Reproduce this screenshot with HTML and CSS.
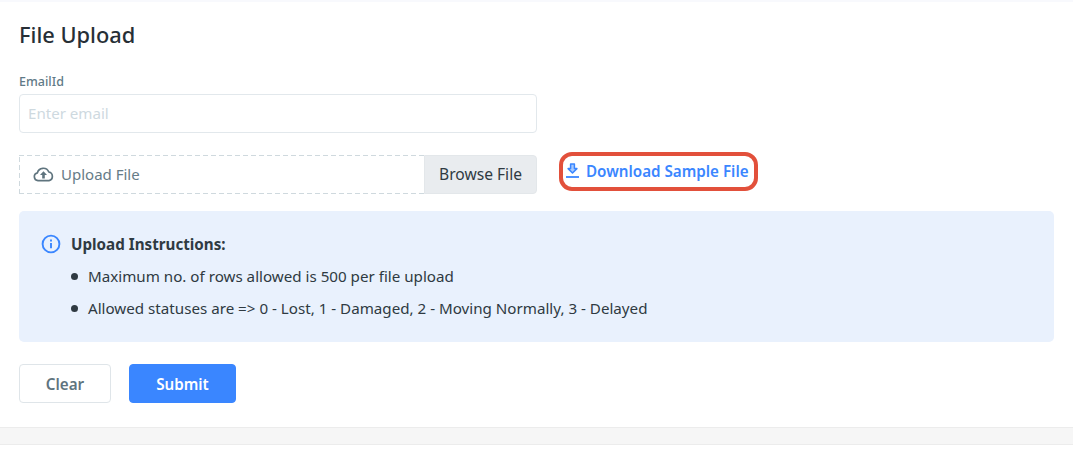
FILE: index.html
```html
<!DOCTYPE html>
<html lang="en">
<head>
<meta charset="utf-8">
<title>File Upload</title>
<link rel="stylesheet" href="styles.css">
</head>
<body>
<div class="page">
  <main class="card">
    <h1 class="title">File Upload</h1>
    <label class="label" for="email">EmailId</label>
    <input class="input" id="email" type="text" placeholder="Enter email">
    <div class="upload-row">
      <div class="upload">
        <div class="dropzone">
          <svg class="cloud" width="21" height="16" viewBox="0 0 21 16"><path fill="none" stroke="#5f747e" stroke-width="1.7" stroke-linejoin="round" d="M5 14.6A3.9 3.9 0 0 1 4.4 6.9 6 6 0 0 1 15.8 6a4.4 4.4 0 0 1 .2 8.6z"/><path fill="#5f747e" d="M10.5 5.2 14 8.9h-2.2v3.6H9.2V8.9H7z"/></svg>
          <span class="drop-text">Upload File</span>
        </div>
        <div class="browse">Browse File</div>
      </div>
      <a class="download" href="#">
        <svg width="15" height="17" viewBox="0 0 15 17"><path fill="#a9cbff" stroke="#3a86ff" stroke-width="1.5" stroke-linejoin="round" d="M5.6 2h3.8v4.6h2.5L7.5 11 3.1 6.6h2.5z"/><path fill="none" stroke="#3a86ff" stroke-width="1.8" d="M1 15h13"/></svg>
        <span>Download Sample File</span>
      </a>
    </div>
    <section class="alert">
      <div class="alert-head">
        <svg class="info" width="20" height="20" viewBox="0 0 20 20" fill="none" stroke="#3a86ff" stroke-width="1.9"><circle cx="10" cy="10" r="8.4"/><path d="M10 9v5.2M10 5.6v1.8"/></svg>
        <strong>Upload Instructions:</strong>
      </div>
      <ul class="alert-list">
        <li>Maximum no. of rows allowed is 500 per file upload</li>
        <li>Allowed statuses are =&gt; 0 - Lost, 1 - Damaged, 2 - Moving Normally, 3 - Delayed</li>
      </ul>
    </section>
    <div class="actions">
      <button class="btn btn-clear" type="button">Clear</button>
      <button class="btn btn-submit" type="button">Submit</button>
    </div>
  </main>
  <div class="strip"></div>
</div>
</body>
</html>
```
FILE: styles.css
```css
* { box-sizing: border-box; }
html, body { margin: 0; padding: 0; background: #fff; }
body { font-family: "Noto Sans", "Open Sans", sans-serif; color: #2b3540; height: 463px; overflow: hidden; }
.page { display: flex; flex-direction: column; }
.card { border-top: 2px solid #f8f9fd; padding: 19px 19px 23px; height: 427px; display: flex; flex-direction: column; }
.title { margin: 0; font-size: 21.8px; font-weight: 500; line-height: 28px; color: #272f36; }
.label { margin-top: 24px; font-size: 12.5px; font-weight: 500; line-height: 18px; color: #5f7a87; height: 21px; }
.input { width: 518px; height: 39px; padding: 0 0 2px 8px; border: 1px solid #e2e8ec; border-radius: 4px; font: 400 15.1px "Noto Sans", sans-serif; outline: none; }
.input::placeholder { color: #ced9df; opacity: 1; }
.upload-row { display: flex; margin-top: 22px; height: 39px; }
.upload { width: 518px; height: 39px; display: flex; }
.dropzone {
  flex: 1; display: flex; align-items: center; gap: 8px; padding: 0 0 1px 14px; font-size: 15px; color: #667c87;
  background:
    repeating-linear-gradient(90deg, #cfd9de 0 5px, transparent 5px 8px) left top / 100% 1px no-repeat,
    repeating-linear-gradient(90deg, #cfd9de 0 5px, transparent 5px 8px) left bottom / 100% 1px no-repeat,
    repeating-linear-gradient(0deg, #cfd9de 0 5px, transparent 5px 8px) left top / 1px 100% no-repeat;
}
.drop-text { margin-left: -1px; }
.browse { width: 113px; display: flex; align-items: center; justify-content: center; padding-bottom: 1px; background: #e9ecef; border: 1px solid #e3e7ea; border-radius: 0 4px 4px 0; font-size: 15.6px; color: #2f3a42; }
.download { margin-left: 22px; margin-top: -3px; width: 199px; height: 39px; display: flex; align-items: center; gap: 6px; padding: 0 0 2px 2px; border: 4px solid #e2503b; border-radius: 13px; color: #3a86ff; font-size: 15.2px; font-weight: 600; text-decoration: none; white-space: nowrap; }
.alert { margin-top: 17px; width: 1035px; height: 131px; padding: 23px 23px 0; background: #e9f1fd; border-radius: 5px; font-size: 15.17px; color: #2f3a42; }
.alert-head { display: flex; align-items: center; gap: 9px; height: 20px; }
.info { margin-left: -1px; margin-right: 1px; }
.alert-head strong { font-weight: 700; font-size: 15.2px; }
.alert-list { margin: 6px 0 0; padding: 0; list-style: none; }
.alert-list li { position: relative; padding-left: 23px; margin-left: 23px; line-height: 32px; }
.alert-list li::before { content: ""; position: absolute; left: 6px; top: 13px; width: 7px; height: 7px; border-radius: 50%; background: #2f3a42; }
.actions { display: flex; gap: 18px; margin-top: 22px; }
.btn { height: 39px; border-radius: 4px; font: 600 15.2px "Noto Sans", sans-serif; cursor: pointer; }
.btn-clear { width: 92px; background: #fff; border: 1px solid #dfe5e9; color: #5f747e; }
.btn-submit { width: 107px; background: #3a86ff; border: 1px solid #3a86ff; color: #fff; }
.strip { height: 18px; background: #f6f6f6; border-top: 1px solid #ececec; border-bottom: 1px solid #ececec; }
```
